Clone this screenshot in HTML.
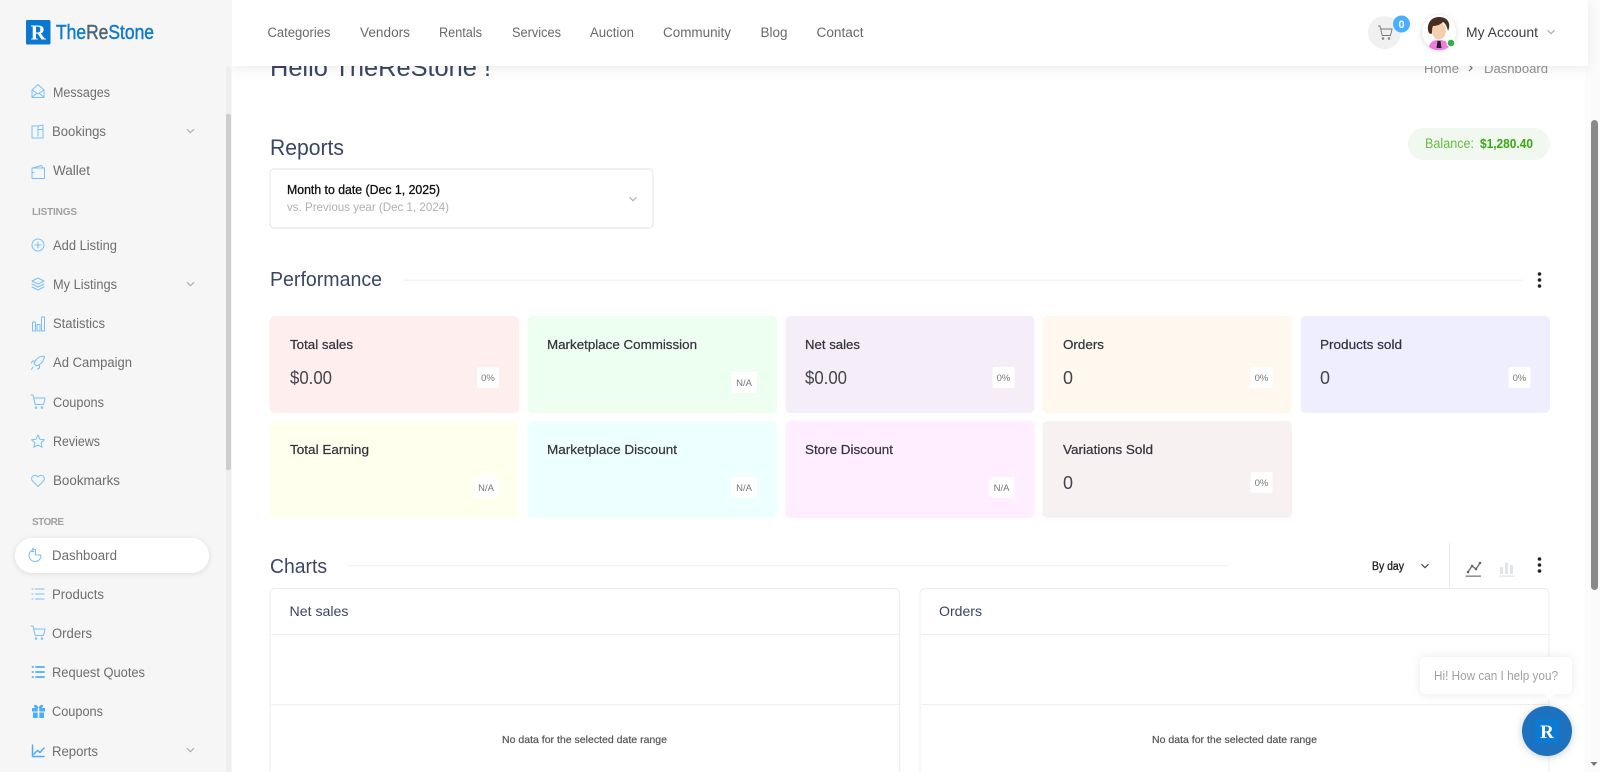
<!DOCTYPE html>
<html lang="en"><head><meta charset="utf-8"><title>TheReStone Dashboard</title>
<style>
html,body{margin:0;padding:0;width:1600px;height:772px;overflow:hidden;background:#fff}
svg{display:block}
text{font-family:"Liberation Sans",sans-serif}
.s{font-size:13.5px;fill:#6e6e6e}
.h{font-size:10px;fill:#a0a0a0;font-weight:bold}
.n{font-size:13.5px;fill:#666a6e}
.l{font-size:13px;fill:#33333d;stroke:#33333d;stroke-width:.22px}
.v{font-size:18px;fill:#44444c}
.b{font-size:9.5px;fill:#777}
.t{fill:#3a4666}
.ic{fill:none;stroke:#78c0fb;stroke-width:1;stroke-linecap:round;stroke-linejoin:round}
.ch{fill:none;stroke:#b0b0b0;stroke-width:1.2}
.nd{font-size:10.5px;fill:#555;stroke:#555;stroke-width:.2px}
</style></head><body>
<svg width="1600" height="772" viewBox="0 0 1600 772" xmlns="http://www.w3.org/2000/svg">
<defs>
<g id="cart"><path d="M-7-7h2l2.200 9.500h8.300l1.600-6.500H-4"/><circle cx="-2" cy="5.500" r=".8"/><circle cx="4" cy="5.500" r=".8"/></g>
<g id="chev"><path d="M-3.500-1.800 0 1.700 3.500-1.800"/></g>
</defs>

<!-- main content -->
<g>
<text x="270" y="76" class="t" font-size="25" textLength="221" lengthAdjust="spacingAndGlyphs">Hello TheReStone !</text>
<text x="1424" y="73" font-size="12.5" fill="#929292" textLength="35" lengthAdjust="spacingAndGlyphs">Home</text>
<path d="M1469 65l3 3-3 3" fill="none" stroke="#777" stroke-width="1.200"/>
<text x="1484" y="73" font-size="12.5" fill="#929292" textLength="64" lengthAdjust="spacingAndGlyphs">Dashboard</text>

<text x="270" y="155" class="t" font-size="22" textLength="74" lengthAdjust="spacingAndGlyphs">Reports</text>
<rect x="1408" y="128" width="142" height="32" rx="16" fill="#f1f8ef"/>
<text x="1425" y="148" font-size="13.5" fill="#66bb46" textLength="49" lengthAdjust="spacingAndGlyphs">Balance:</text>
<text x="1480" y="148" font-size="13" font-weight="bold" fill="#3aa712" textLength="53" lengthAdjust="spacingAndGlyphs">$1,280.40</text>

<rect x="270" y="169" width="383" height="59" rx="4" fill="#fff" stroke="#ececec" stroke-width="1.400"/>
<text x="287" y="194" font-size="12.5" fill="#111" stroke="#111" stroke-width=".3" textLength="153" lengthAdjust="spacingAndGlyphs">Month to date (Dec 1, 2025)</text>
<text x="287" y="211" font-size="12" fill="#b0b0b0" textLength="162" lengthAdjust="spacingAndGlyphs">vs. Previous year (Dec 1, 2024)</text>
<use href="#chev" x="633" y="199" class="ch"/>

<text x="270" y="286" class="t" font-size="20" textLength="112" lengthAdjust="spacingAndGlyphs">Performance</text>
<rect x="404" y="279.500" width="1118" height="1.300" fill="#f2f2f2"/>
<g fill="#222"><circle cx="1539.500" cy="274" r="1.800"/><circle cx="1539.500" cy="280" r="1.800"/><circle cx="1539.500" cy="286" r="1.800"/></g>

<!-- cards row 1 -->
<rect x="269.500" y="316" width="249.500" height="97" rx="5" fill="#ffeeee"/>
<rect x="527.500" y="316" width="249.500" height="97" rx="5" fill="#edfff0"/>
<rect x="785.500" y="316" width="249" height="97" rx="5" fill="#f5eef8"/>
<rect x="1042.500" y="316" width="249.500" height="97" rx="5" fill="#fff8ee"/>
<rect x="1300.500" y="316" width="249.500" height="97" rx="5" fill="#eeeeff"/>
<!-- cards row 2 -->
<rect x="269.500" y="421" width="249.500" height="97" rx="5" fill="#ffffee"/>
<rect x="527.500" y="421" width="249.500" height="97" rx="5" fill="#eeffff"/>
<rect x="785.500" y="421" width="249" height="97" rx="5" fill="#ffeeff"/>
<rect x="1042.500" y="421" width="249.500" height="97" rx="5" fill="#f7f1f1"/>

<text x="290" y="349" class="l" textLength="63" lengthAdjust="spacingAndGlyphs">Total sales</text>
<text x="547" y="349" class="l" textLength="150" lengthAdjust="spacingAndGlyphs">Marketplace Commission</text>
<text x="805" y="349" class="l" textLength="55" lengthAdjust="spacingAndGlyphs">Net sales</text>
<text x="1063" y="349" class="l" textLength="41" lengthAdjust="spacingAndGlyphs">Orders</text>
<text x="1320" y="349" class="l" textLength="82" lengthAdjust="spacingAndGlyphs">Products sold</text>
<text x="290" y="454" class="l" textLength="79" lengthAdjust="spacingAndGlyphs">Total Earning</text>
<text x="547" y="454" class="l" textLength="130" lengthAdjust="spacingAndGlyphs">Marketplace Discount</text>
<text x="805" y="454" class="l" textLength="88" lengthAdjust="spacingAndGlyphs">Store Discount</text>
<text x="1063" y="454" class="l" textLength="90" lengthAdjust="spacingAndGlyphs">Variations Sold</text>

<text x="290" y="384" class="v" textLength="42" lengthAdjust="spacingAndGlyphs">$0.00</text>
<text x="805" y="384" class="v" textLength="42" lengthAdjust="spacingAndGlyphs">$0.00</text>
<text x="1063" y="384" class="v">0</text>
<text x="1320" y="384" class="v">0</text>
<text x="1063" y="489" class="v">0</text>

<g fill="#fff">
<rect x="477" y="367" width="22" height="21" rx="2"/><rect x="992.500" y="367" width="22" height="21" rx="2"/><rect x="1250.500" y="367" width="22" height="21" rx="2"/><rect x="1508.500" y="367" width="22" height="21" rx="2"/><rect x="1250.500" y="472" width="22" height="21" rx="2"/>
<rect x="731" y="372" width="26" height="21" rx="2"/><rect x="473" y="477" width="26" height="21" rx="2"/><rect x="731" y="477" width="26" height="21" rx="2"/><rect x="988.500" y="477" width="26" height="21" rx="2"/>
</g>
<g class="b" text-anchor="middle">
<text x="488" y="381">0%</text><text x="1003.500" y="381">0%</text><text x="1261.500" y="381">0%</text><text x="1519.500" y="381">0%</text><text x="1261.500" y="486">0%</text>
<text x="744" y="386">N/A</text><text x="486" y="491">N/A</text><text x="744" y="491">N/A</text><text x="1001.500" y="491">N/A</text>
</g>

<!-- charts -->
<text x="270" y="573" class="t" font-size="20" textLength="57" lengthAdjust="spacingAndGlyphs">Charts</text>
<rect x="347" y="565" width="882" height="1.200" fill="#f2f2f2"/>
<text x="1372" y="570" font-size="11.5" fill="#222" stroke="#222" stroke-width=".3" textLength="32" lengthAdjust="spacingAndGlyphs">By day</text>
<use href="#chev" x="1425" y="566" fill="none" stroke="#444" stroke-width="1.100"/>
<rect x="1449" y="543" width="1" height="46" fill="#ececec"/>
<path d="M1468 572l4-6 4 3 4-6" fill="none" stroke="#666" stroke-width="1.300"/>
<g fill="#666"><circle cx="1468" cy="572" r="1.300"/><circle cx="1472" cy="566" r="1.300"/><circle cx="1476" cy="569" r="1.300"/><circle cx="1480" cy="563" r="1.300"/></g>
<rect x="1465.500" y="575.500" width="15.500" height="1.300" fill="#777"/>
<g fill="#e2e5e8"><rect x="1500" y="567" width="3" height="7"/><rect x="1505" y="563" width="3" height="11"/><rect x="1510" y="565" width="3" height="9"/><rect x="1499" y="575.500" width="15.500" height="1.300"/></g>
<g fill="#222"><circle cx="1539.500" cy="559" r="1.800"/><circle cx="1539.500" cy="565" r="1.800"/><circle cx="1539.500" cy="571" r="1.800"/></g>

<g fill="#fff" stroke="#ececec">
<path d="M270 800V593.500a5 5 0 0 1 5-5H894.500a5 5 0 0 1 5 5V800"/>
<path d="M920 800V593.500a5 5 0 0 1 5-5H1544a5 5 0 0 1 5 5V800"/>
</g>
<g stroke="#eeeeee"><path d="M271 634.500H899M271 704.500H899M921 634.500H1549M921 704.500H1549"/></g>
<text x="289.500" y="616" class="t" font-size="14" textLength="59" lengthAdjust="spacingAndGlyphs">Net sales</text>
<text x="939" y="616" class="t" font-size="14" textLength="43" lengthAdjust="spacingAndGlyphs">Orders</text>
<text x="502" y="743" class="nd" textLength="165" lengthAdjust="spacingAndGlyphs">No data for the selected date range</text>
<text x="1152" y="743" class="nd" textLength="165" lengthAdjust="spacingAndGlyphs">No data for the selected date range</text>
</g>

<!-- page scrollbar -->
<rect x="1585" y="0" width="15" height="772" fill="#fbfbfb"/>
<rect x="1591" y="120" width="7" height="470" rx="3.500" fill="#8a8a8a"/>
<path d="M1590.500 762h7l-3.500 4z" fill="#777"/>

<!-- header -->
<rect x="232" y="0" width="1356" height="66" fill="#fff" style="filter:drop-shadow(0 3px 6px rgba(0,0,0,.07))"/>
<g class="n">
<text x="267.500" y="37" textLength="63" lengthAdjust="spacingAndGlyphs">Categories</text>
<text x="360" y="37" textLength="50" lengthAdjust="spacingAndGlyphs">Vendors</text>
<text x="439" y="37" textLength="43" lengthAdjust="spacingAndGlyphs">Rentals</text>
<text x="512" y="37" textLength="49" lengthAdjust="spacingAndGlyphs">Services</text>
<text x="590" y="37" textLength="44" lengthAdjust="spacingAndGlyphs">Auction</text>
<text x="663" y="37" textLength="68" lengthAdjust="spacingAndGlyphs">Community</text>
<text x="760.500" y="37" textLength="27" lengthAdjust="spacingAndGlyphs">Blog</text>
<text x="816.500" y="37" textLength="47" lengthAdjust="spacingAndGlyphs">Contact</text>
</g>
<circle cx="1384.500" cy="32.500" r="16.500" fill="#f0f0f0"/>
<use href="#cart" x="1385" y="33" fill="none" stroke="#777" stroke-width=".9"/>
<circle cx="1401.500" cy="24" r="8.500" fill="#4aaeff"/>
<text x="1401.500" y="28" text-anchor="middle" font-size="11" font-weight="bold" fill="#fff">0</text>
<circle cx="1439" cy="32" r="17" fill="#fff" style="filter:drop-shadow(0 1px 3px rgba(0,0,0,.15))"/>
<path d="M1429 47c1-6 6-7 10-7s9 1 10 7a17 17 0 0 1-20 0z" fill="#ee7be0"/>
<path d="M1437.500 41h3l1 7h-5z" fill="#222"/>
<ellipse cx="1439" cy="31" rx="7" ry="8.500" fill="#f3cfae"/>
<path d="M1429 33c-3-6 0-16 10-16s12 8 9 14c-1-5-3-8-5-9-3 3-7 4-10 4-1 2-1 5-1 7 0 1-2 1-3 0z" fill="#4a2c20"/>
<circle cx="1451" cy="43" r="4.500" fill="#fff"/><circle cx="1451" cy="43" r="3.300" fill="#2fb14a"/>
<text x="1466" y="37" font-size="14" fill="#3c3c48" textLength="72" lengthAdjust="spacingAndGlyphs">My Account</text>
<use href="#chev" x="1551" y="32" class="ch"/>

<!-- sidebar -->
<rect x="0" y="0" width="232" height="772" fill="#f6f6f6"/>
<rect x="226" y="66" width="5" height="706" rx="2" fill="#eeeeee"/>
<rect x="226" y="114" width="5" height="356" rx="2" fill="#cdcdcd"/>

<rect x="26" y="20" width="24.500" height="24.500" rx="1.500" fill="#0a78cf"/>
<text x="38.200" y="39.500" text-anchor="middle" style="font-family:'Liberation Serif',serif" font-size="21" font-weight="bold" fill="#fff">R</text>
<text x="56" y="39" font-size="20" stroke-width=".45" textLength="98" lengthAdjust="spacingAndGlyphs"><tspan fill="#0e7bcf" stroke="#0e7bcf">The</tspan><tspan fill="#4d6577" stroke="#4d6577">Re</tspan><tspan fill="#0e7bcf" stroke="#0e7bcf">Stone</tspan></text>

<rect x="15" y="538" width="194" height="35" rx="17.500" fill="#fff" style="filter:drop-shadow(0 1px 3px rgba(0,0,0,.1))"/>

<g class="s">
<text x="53" y="97" textLength="57" lengthAdjust="spacingAndGlyphs">Messages</text>
<text x="52" y="136" textLength="54" lengthAdjust="spacingAndGlyphs">Bookings</text>
<text x="53" y="175" textLength="37" lengthAdjust="spacingAndGlyphs">Wallet</text>
<text x="53" y="250" textLength="64" lengthAdjust="spacingAndGlyphs">Add Listing</text>
<text x="53" y="289" textLength="64" lengthAdjust="spacingAndGlyphs">My Listings</text>
<text x="53" y="328" textLength="52" lengthAdjust="spacingAndGlyphs">Statistics</text>
<text x="53" y="367" textLength="79" lengthAdjust="spacingAndGlyphs">Ad Campaign</text>
<text x="53" y="407" textLength="51" lengthAdjust="spacingAndGlyphs">Coupons</text>
<text x="53" y="446" textLength="47" lengthAdjust="spacingAndGlyphs">Reviews</text>
<text x="53" y="485" textLength="67" lengthAdjust="spacingAndGlyphs">Bookmarks</text>
<text x="52" y="560" textLength="65" lengthAdjust="spacingAndGlyphs">Dashboard</text>
<text x="52" y="599" textLength="52" lengthAdjust="spacingAndGlyphs">Products</text>
<text x="52" y="638" textLength="40" lengthAdjust="spacingAndGlyphs">Orders</text>
<text x="52" y="677" textLength="93" lengthAdjust="spacingAndGlyphs">Request Quotes</text>
<text x="52" y="716" textLength="51" lengthAdjust="spacingAndGlyphs">Coupons</text>
<text x="52" y="756" textLength="46" lengthAdjust="spacingAndGlyphs">Reports</text>
</g>
<text x="32" y="215" class="h" textLength="45" lengthAdjust="spacing">LISTINGS</text>
<text x="32" y="525" class="h" textLength="32" lengthAdjust="spacing">STORE</text>
<use href="#chev" x="190.500" y="131" class="ch"/><use href="#chev" x="190.500" y="284" class="ch"/><use href="#chev" x="190.500" y="750" class="ch"/>

<g class="ic">
<!-- messages -->
<path d="M32 90l6-5.500 6 5.500v7.500H32zM32 90l6 4 6-4M32 97.500l4.500-4M44 97.500l-4.500-4"/>
<!-- bookings -->
<path d="M32 126h6v3.500h5V138H32zM38 126l5-1v4.500M38 129.500V136"/>
<!-- wallet -->
<path d="M32.500 168l9-2.500 1.500 2.500M32 168h12.500v10.500H32zM32 172.500h2"/>
<!-- add listing -->
<circle cx="38" cy="245" r="6"/><path d="M35 245h6M38 242v6"/>
<!-- my listings -->
<path d="M38 278l6 3-6 3-6-3zM32 284l6 3 6-3M32 287l6 3 6-3"/>
<!-- statistics -->
<path d="M32.500 322h3v9h-3zM37 324.500h3V331h-3zM41.500 317h3v14h-3z"/>
<!-- ad campaign -->
<path d="M44.500 356.500c-4-.5-7 1-9 4l-1.500 3 2.500 2.500 3-1.500c3-2 4.500-5 5-8zM35 361h-2.500l-1 2M39.500 365.500v2.500l-2 1M33 367l-1.500 2.500"/>
<!-- coupons -->
<use href="#cart" x="38" y="402"/>
<!-- reviews -->
<path d="M38 435l1.900 4.200 4.600.5-3.400 3.100 1 4.500-4.100-2.300-4.100 2.300 1-4.500-3.400-3.100 4.600-.5z"/>
<!-- bookmarks -->
<path d="M38 486.500l-5.500-5.500c-3-3.500 2.500-8.500 5.500-4 3-4.500 8.500.5 5.500 4z"/>
<!-- dashboard -->
<path d="M35.500 549.500a6 6 0 1 0 5.500 5.500h-5.500zM33.500 548c-1.200.8-1.500 2-1.500 3.500h2"/>
<!-- products -->
<path d="M35.500 589h8.500M35.500 594h8.500M35.500 599h8.500"/><path d="M32 589h1M32 594h1M32 599h1"/>
<!-- orders -->
<use href="#cart" x="38" y="633"/>
<!-- request quotes -->
<path stroke-width="1.800" stroke="#4aaeff" d="M36 667h8M36 672h8M36 677h8M32.500 667h.5M32.500 672h.5M32.500 677h.5"/>
<!-- reports -->
<path stroke="#4aaeff" stroke-width="1.500" d="M32.500 745v11.500H44M34 754l3.500-3.500 2.500 2 4-4.500"/>
</g>
<!-- gift -->
<g fill="#4aaeff"><rect x="32" y="708" width="13" height="3.500"/><rect x="33" y="712.500" width="11" height="5.500"/><path d="M34 705.500c2-1.500 3.500 0 4.500 2.500-2.500.5-5-.5-4.500-2.500zM43 705.500c-2-1.500-3.500 0-4.500 2.500 2.500.5 5-.5 4.500-2.500z"/></g>
<rect x="37.700" y="708" width="1.600" height="10" fill="#f6f6f6"/>

<!-- chat -->
<rect x="1420" y="657" width="152" height="37" rx="6" fill="#fff" style="filter:drop-shadow(0 0 5px rgba(0,0,0,.09))"/>
<path d="M1544 694h12l-6 6z" fill="#fff"/>
<text x="1434" y="680" font-size="12.5" fill="#a0a0a0" textLength="124" lengthAdjust="spacingAndGlyphs">Hi! How can I help you?</text>
<circle cx="1547" cy="731" r="25" fill="#1c72bf" style="filter:drop-shadow(0 1px 4px rgba(0,0,0,.2))"/>
<rect x="1535" y="719" width="23" height="24" fill="#0a7ad2"/>
<text x="1547" y="738" text-anchor="middle" style="font-family:'Liberation Serif',serif" font-size="19" font-weight="bold" fill="#fff">R</text>
</svg>
</body></html>
